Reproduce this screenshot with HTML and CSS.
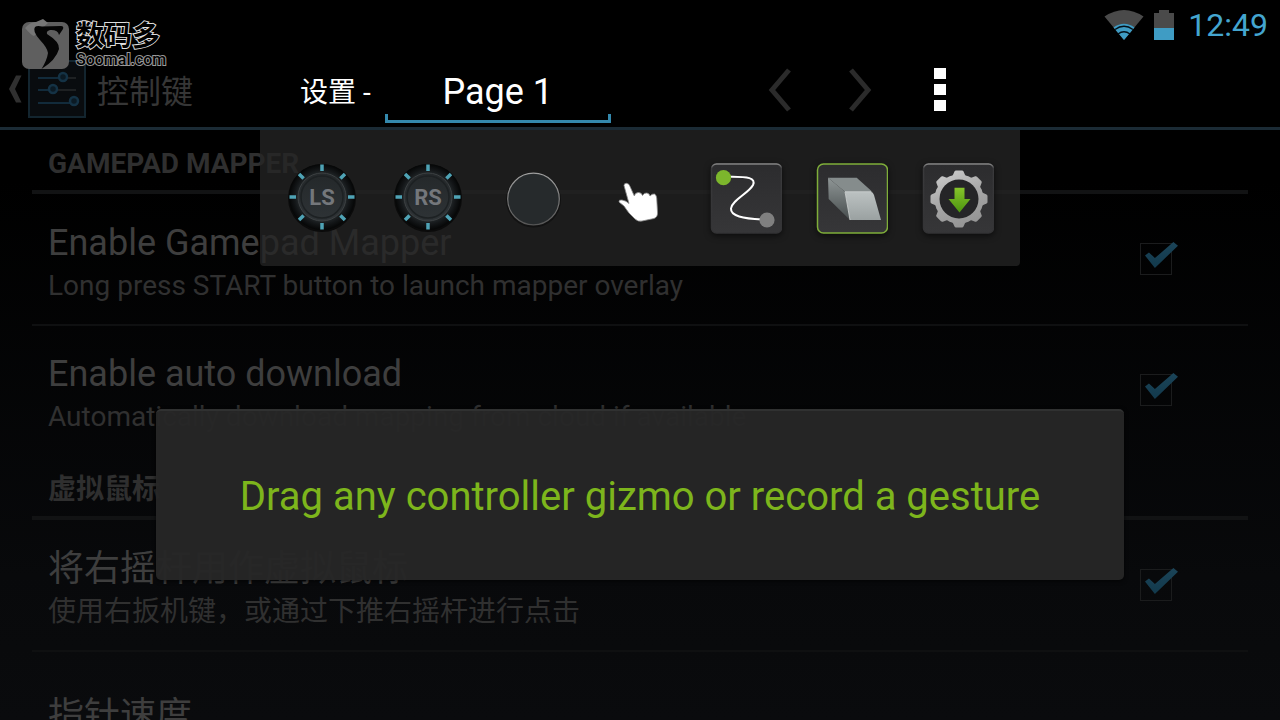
FILE: index.html
```html
<!DOCTYPE html>
<html lang="zh-CN">
<head>
<meta charset="UTF-8">
<meta name="viewport" content="width=device-width, initial-scale=1.0">
<title>Gamepad Mapper</title>
<link rel="stylesheet" href="styles.css">
</head>
<body>
<div class="status-bar">
  <svg class="wifi" viewBox="0 0 40 32" width="40" height="32">
    <path d="M20 31 L0.5 7.500 Q20 -5.500 39.500 7.500 Z" fill="#4a4a4a"/>
    <path d="M20 31 L9.500 18.500 Q20 11 30.500 18.500 Z" fill="#3f9cc4"/>
    <path d="M11 20.500 Q20 14 29 20.500 M14 25 Q20 20.500 26 25" fill="none" stroke="#031018" stroke-width="1.500"/>
  </svg>
  <svg class="battery" viewBox="0 0 20 32" width="20" height="32">
    <path d="M5 1 H15 V4 H20 V31 H0 V4 H5 Z" fill="#4a4a4a"/>
    <path d="M0 19 H20 V31 H0 Z" fill="#3f9cc4"/>
  </svg>
  <span class="clock">12:49</span>
</div>

<header class="action-bar">
  <svg class="back" viewBox="0 0 14 28" width="14" height="28">
    <path d="M13.500 0.500 L8 0.500 L1 14 L8 27.500 L13.500 27.500 L7 14 Z" fill="#303030"/>
  </svg>
  <svg class="app-icon" viewBox="0 0 58 58" width="58" height="58">
    <rect x="1" y="1" width="56" height="56" fill="#090c0f" stroke="#13252f" stroke-width="2"/>
    <path d="M10 18 H48 M10 30 H48 M10 43 H48" stroke="#1e2123" stroke-width="2"/>
    <path d="M10 18 H35 M10 30 H24 M10 43 H44" stroke="#122b3b" stroke-width="2"/>
    <g fill="#0b1a24" stroke="#143245" stroke-width="2.500">
      <circle cx="35" cy="17" r="4"/>
      <circle cx="25" cy="29" r="4"/>
      <circle cx="46" cy="41" r="4"/>
    </g>
  </svg>
  <h1 class="action-title">控制键</h1>
</header>

<main class="settings">
  <section class="group">
    <h2 class="group-title">GAMEPAD MAPPER</h2>
    <div class="row">
      <label class="row-text" for="mapper">
        <span class="title">Enable Gamepad Mapper</span>
        <span class="summary">Long press START button to launch mapper overlay</span>
      </label>
      <input class="check" type="checkbox" id="mapper" checked>
    </div>
    <div class="row">
      <label class="row-text" for="download">
        <span class="title">Enable auto download</span>
        <span class="summary">Automatically download mapping from cloud if available</span>
      </label>
      <input class="check" type="checkbox" id="download" checked>
    </div>
  </section>
  <section class="group">
    <h2 class="group-title">虚拟鼠标</h2>
    <div class="row">
      <label class="row-text" for="mouse">
        <span class="title">将右摇杆用作虚拟鼠标</span>
        <span class="summary">使用右扳机键，或通过下推右摇杆进行点击</span>
      </label>
      <input class="check" type="checkbox" id="mouse" checked>
    </div>
    <div class="row">
      <div class="row-text">
        <span class="title">指针速度</span>
      </div>
    </div>
  </section>
</main>

<!-- mapper overlay -->
<div class="overlay">
  <div class="page-bar">
    <label class="page-label" for="page">设置 -</label>
    <input class="page-name" type="text" id="page" value="Page 1">
    <div class="page-actions">
      <button class="icon-button" type="button" aria-label="Previous page">
        <svg viewBox="0 0 24 44" width="24" height="44"><path d="M21 2 L4 22 L21 42" fill="none" stroke="#2b2b2b" stroke-width="5"/></svg>
      </button>
      <button class="icon-button" type="button" aria-label="Next page">
        <svg viewBox="0 0 24 44" width="24" height="44"><path d="M3 2 L20 22 L3 42" fill="none" stroke="#2b2b2b" stroke-width="5"/></svg>
      </button>
      <button class="icon-button" type="button" aria-label="Menu">
        <svg viewBox="0 0 12 44" width="12" height="44"><path d="M0 0 H12 V11 H0 Z M0 16 H12 V27 H0 Z M0 32 H12 V43 H0 Z" fill="#fff"/></svg>
      </button>
    </div>
  </div>

  <div class="toolbar">
    <button class="tool" type="button" aria-label="Left stick">
      <svg viewBox="0 0 72 72" width="72" height="72">
        <defs>
          <radialGradient id="rim">
            <stop offset="0.700" stop-color="#23282a"/>
            <stop offset="0.820" stop-color="#15181a"/>
            <stop offset="1" stop-color="#050606"/>
          </radialGradient>
          <linearGradient id="cap" x1="0" y1="0" x2="0" y2="1">
            <stop offset="0" stop-color="#24282a"/>
            <stop offset="1" stop-color="#2e3336"/>
          </linearGradient>
          <linearGradient id="edge" x1="0" y1="0" x2="0" y2="1">
            <stop offset="0" stop-color="#a0a0a0"/>
            <stop offset="1" stop-color="#555"/>
          </linearGradient>
          <linearGradient id="tile" x1="0" y1="0" x2="0" y2="1">
            <stop offset="0" stop-color="#2c2c2e"/>
            <stop offset="1" stop-color="#363638"/>
          </linearGradient>
          <linearGradient id="tile-edge" x1="0" y1="0" x2="0" y2="1">
            <stop offset="0" stop-color="#8a8a8a"/>
            <stop offset="0.060" stop-color="#3a3a3c"/>
            <stop offset="1" stop-color="#333335"/>
          </linearGradient>
          <g id="knob">
            <circle cx="36" cy="36" r="34" fill="#0b0b0b"/>
            <circle cx="36" cy="35" r="33" fill="url(#rim)"/>
            <circle cx="36" cy="35" r="24" fill="url(#cap)" stroke="#3c4042" stroke-width="1"/>
            <circle cx="36" cy="35" r="21" fill="none" stroke="#1d2123" stroke-width="1.500"/>
            <g stroke="#4fa3b5" stroke-width="3.500">
              <path d="M36 2.500 V9 M36 61 V67.500 M3.500 35 H10 M62 35 H68.500"/>
              <path d="M13 12 L17.600 16.600 M54.400 53.400 L59 58 M59 12 L54.400 16.600 M17.600 53.400 L13 58"/>
            </g>
          </g>
        </defs>
        <use href="#knob"/>
        <text class="knob-text" x="36" y="43">LS</text>
      </svg>
    </button>
    <button class="tool" type="button" aria-label="Right stick">
      <svg viewBox="0 0 72 72" width="72" height="72">
        <use href="#knob"/>
        <text class="knob-text" x="36" y="43">RS</text>
      </svg>
    </button>
    <button class="tool" type="button" aria-label="Button">
      <svg viewBox="0 0 72 72" width="72" height="72">
        <circle cx="35.500" cy="38" r="27.500" fill="#121212"/>
        <circle cx="35.500" cy="37" r="25.800" fill="#262a2c" stroke="url(#edge)" stroke-width="1.200"/>
      </svg>
    </button>
    <button class="tool" type="button" aria-label="Touch">
      <svg viewBox="0 0 72 72" width="72" height="72">
        <path d="M20 23.500 Q20 21.300 22.500 21.300 Q25 21.500 25.800 24 L30.300 34 Q31 30.500 34.500 30.500 Q37.500 30.500 38.500 33.500 Q40 30.500 43 31 Q45.500 31.500 46 34 Q48 31.500 50.500 32 Q52.500 33 52.700 36 L53.500 50 Q54 55 50 56.500 L38 59 Q34 60 31 57 L25 51 Q22 47 20 44 L15 40 Q14.500 37.500 18 38 Q22 38.500 25 41.500 Z" fill="#fff" stroke="#8a8a8a" stroke-width="0.800"/>
      </svg>
    </button>
    <button class="tool" type="button" aria-label="Record gesture">
      <svg class="tile" viewBox="0 0 72 72" width="72" height="72">
        <rect x="1.500" y="2" width="70" height="69" rx="5" fill="url(#tile)" stroke="url(#tile-edge)" stroke-width="1.500"/>
        <path d="M20 14.700 C38 14.500 46 16 43 23 C39 31 22 38 21 46.500 C20.500 54 33 56.500 52 57.500" fill="none" stroke="#fff" stroke-width="2"/>
        <circle cx="13.500" cy="15.700" r="7.600" fill="#7cb62c"/>
        <circle cx="57" cy="58" r="7.600" fill="#808080"/>
      </svg>
    </button>
    <button class="tool" type="button" aria-label="Eraser" aria-pressed="true">
      <svg class="tile" viewBox="0 0 72 72" width="72" height="72">
        <defs>
          <linearGradient id="face" x1="0" y1="0" x2="0" y2="1">
            <stop offset="0" stop-color="#bcc2c2"/>
            <stop offset="1" stop-color="#9aa1a1"/>
          </linearGradient>
          <linearGradient id="side" x1="0" y1="0" x2="0" y2="1">
            <stop offset="0" stop-color="#8f9696"/>
            <stop offset="1" stop-color="#474d4e"/>
          </linearGradient>
        </defs>
        <rect x="1.500" y="2" width="70" height="69" rx="6" fill="url(#tile)" stroke="#7fae3a" stroke-width="1.500"/>
        <path d="M12 15.700 H40.700 L56.300 29.700 H29 Z" fill="#858c8c"/>
        <path d="M12 15.700 L29 29.700 L34 58 L12.700 37 Z" fill="url(#side)"/>
        <path d="M29 29.700 H55 Q57 30 58 33 L65 58 H34 Z" fill="url(#face)"/>
        <path d="M34 58 L29 29.700 H55" fill="none" stroke="#d0d4d4" stroke-width="0.800"/>
      </svg>
    </button>
    <button class="tool" type="button" aria-label="Download mapping">
      <svg class="tile" viewBox="0 0 72 72" width="72" height="72">
        <defs>
          <linearGradient id="metal" x1="0" y1="0" x2="0.400" y2="1">
            <stop offset="0" stop-color="#d2d2d2"/>
            <stop offset="0.550" stop-color="#a8a8a8"/>
            <stop offset="1" stop-color="#969696"/>
          </linearGradient>
          <linearGradient id="arrow" x1="0" y1="0" x2="0" y2="1">
            <stop offset="0" stop-color="#86c52a"/>
            <stop offset="1" stop-color="#4c9410"/>
          </linearGradient>
          <path id="tooth" d="M29.500 16 L32.500 9.500 Q33 8.500 34 8.500 H40 Q41 8.500 41.500 9.500 L44.500 16 Z" fill="#fff"/>
          <mask id="gear" maskUnits="userSpaceOnUse" x="0" y="0" width="72" height="72">
            <circle cx="37" cy="37" r="24.500" fill="#fff"/>
            <use href="#tooth"/>
            <use href="#tooth" transform="rotate(45 37 37)"/>
            <use href="#tooth" transform="rotate(90 37 37)"/>
            <use href="#tooth" transform="rotate(135 37 37)"/>
            <use href="#tooth" transform="rotate(180 37 37)"/>
            <use href="#tooth" transform="rotate(225 37 37)"/>
            <use href="#tooth" transform="rotate(270 37 37)"/>
            <use href="#tooth" transform="rotate(315 37 37)"/>
            <circle cx="37" cy="37" r="19.500" fill="#000"/>
          </mask>
        </defs>
        <rect x="1.500" y="2" width="70" height="69" rx="5" fill="url(#tile)" stroke="url(#tile-edge)" stroke-width="1.500"/>
        <circle cx="37" cy="37" r="20" fill="#252527"/>
        <rect x="8" y="8" width="58" height="58" fill="url(#metal)" mask="url(#gear)"/>
        <path d="M32.500 25.700 H42.500 V37 H48.500 L37.500 50.500 L26.500 37 H32.500 Z" fill="url(#arrow)"/>
      </svg>
    </button>
  </div>
</div>

<div class="toast" role="status">Drag any controller gizmo or record a gesture</div>

<div class="watermark">
  <svg viewBox="0 0 48 52" width="48" height="52">
    <rect x="0" y="4" width="47" height="47" rx="7" fill="#5f5f5f"/>
    <path d="M3 10 Q8 4 14 4 L21 1 L26 5 L12 18 Q10 18 3 10 Z" fill="#777"/>
    <path d="M13 9 Q15 7.500 20 8.500 L39 8 Q42 8 41 11 L37 17 Q36 11.500 28 12 Q24 13 25 16 Q38 24 37 31 Q34 42 19.500 51 Q25 42 26 35 Q25.500 30 18 22 Q10 13 13 9 Z" fill="#050505"/>
  </svg>
  <div class="watermark-text">
    <span class="watermark-name">数码多</span>
    <span class="watermark-site">Soomal.com</span>
  </div>
</div>
</body>
</html>
```
FILE: styles.css
```css
* {
  margin: 0;
  padding: 0;
  box-sizing: border-box;
}

body {
  height: 100vh;
  background: linear-gradient(#000 0%, #000 25%, #08090b 80%, #0a0b0d 100%);
  font-family: Roboto, "Noto Sans CJK SC", sans-serif;
  overflow: hidden;
  position: relative;
}

svg {
  display: block;
  flex: none;
}

/* Status bar */
.status-bar {
  height: 50px;
  display: flex;
  justify-content: flex-end;
  align-items: center;
  padding-right: 12px;
}

.battery {
  margin: 0 14px 0 10px;
}

.clock {
  color: #44a5cf;
  font-size: 32px;
  line-height: 52px;
}

/* Action bar */
.action-bar {
  height: 80px;
  border-bottom: 3px solid #1b2b35;
  display: flex;
  align-items: center;
  padding-left: 8px;
}

.app-icon {
  margin: 0 11px 0 6px;
}

.action-title {
  color: #363636;
  font-size: 32px;
  font-weight: 400;
}

/* Settings list */
.settings {
  padding: 0 32px;
}

.group {
  margin-bottom: 2px;
}

.group-title {
  height: 64px;
  border-bottom: 4px solid #121314;
  padding: 4px 16px 0;
  color: #2f2f2f;
  font-size: 28px;
  line-height: 60px;
}

.row {
  height: 130px;
  display: flex;
  align-items: center;
  justify-content: space-between;
  padding: 0 76px 0 16px;
}

.row + .row {
  border-top: 2px solid #0f1011;
}

.row-text {
  display: flex;
  flex-direction: column;
  gap: 6px;
  white-space: nowrap;
}

.title {
  color: #3e3e3e;
  font-size: 36px;
  line-height: 48px;
}

.summary {
  color: #303030;
  font-size: 28px;
  line-height: 26px;
}

.check {
  appearance: none;
  position: relative;
  width: 32px;
  height: 32px;
  border: 1px solid #1b1c1d;
}

.check:checked::before {
  content: '';
  position: absolute;
  top: -2px;
  left: 4px;
  width: 33px;
  height: 26px;
  background: linear-gradient(#1b4458, #12394c);
  clip-path: polygon(0 52%, 12% 40%, 30% 62%, 86% 0, 100% 14%, 30% 100%);
}

/* Mapper overlay */
.overlay {
  position: absolute;
  top: 50px;
  left: 50%;
  width: 760px;
  transform: translateX(-50%);
}

.page-bar {
  height: 80px;
  display: flex;
  align-items: center;
  padding: 0 40px;
}

.page-label {
  color: #fff;
  font-size: 28px;
  white-space: nowrap;
}

.page-name {
  width: 226px;
  height: 66px;
  margin-left: 14px;
  padding-top: 3px;
  border: none;
  outline: none;
  color: #fff;
  font-family: inherit;
  font-size: 36px;
  text-align: center;
  background:
    linear-gradient(#3489ad, #3489ad) left bottom / 100% 3px no-repeat,
    linear-gradient(#3489ad, #3489ad) left bottom / 3px 9px no-repeat,
    linear-gradient(#3489ad, #3489ad) right bottom / 3px 9px no-repeat;
}

.page-actions {
  margin-left: auto;
  display: flex;
}

.icon-button {
  width: 80px;
  height: 80px;
  border: none;
  background: none;
  display: flex;
  align-items: center;
  justify-content: center;
  cursor: pointer;
}

.toolbar {
  height: 136px;
  background: rgba(36, 36, 36, 0.77);
  border-radius: 0 0 4px 4px;
  display: flex;
  align-items: center;
  padding: 0 9px;
}

.tool {
  flex: 1;
  border: none;
  background: none;
  font-family: inherit;
  display: flex;
  justify-content: center;
  cursor: pointer;
}

.tile {
  filter: drop-shadow(0 2px 3px rgba(0, 0, 0, 0.6));
}

.knob-text {
  fill: #74777b;
  font-size: 22px;
  font-weight: 700;
  text-anchor: middle;
}

/* Toast */
.toast {
  position: absolute;
  top: 409px;
  left: 156px;
  right: 156px;
  background: rgba(38, 38, 38, 0.96);
  border-top: 2px solid #303131;
  border-radius: 5px;
  box-shadow: 0 1px 4px rgba(0, 0, 0, 0.7);
  color: #7db51c;
  font-size: 40px;
  line-height: 48px;
  padding: 62px 20px 59px;
  text-align: center;
}

/* Watermark */
.watermark {
  position: absolute;
  top: 18px;
  left: 22px;
  display: flex;
  gap: 6px;
}

.watermark-text {
  display: flex;
  flex-direction: column;
  color: #000;
  font-weight: 700;
  -webkit-text-stroke: 2px #ddd;
  paint-order: stroke fill;
}

.watermark-name {
  font-size: 28px;
  line-height: 38px;
}

.watermark-site {
  font-size: 16px;
  font-weight: 500;
  line-height: 8px;
  -webkit-text-stroke: 2px #999;
}
```
